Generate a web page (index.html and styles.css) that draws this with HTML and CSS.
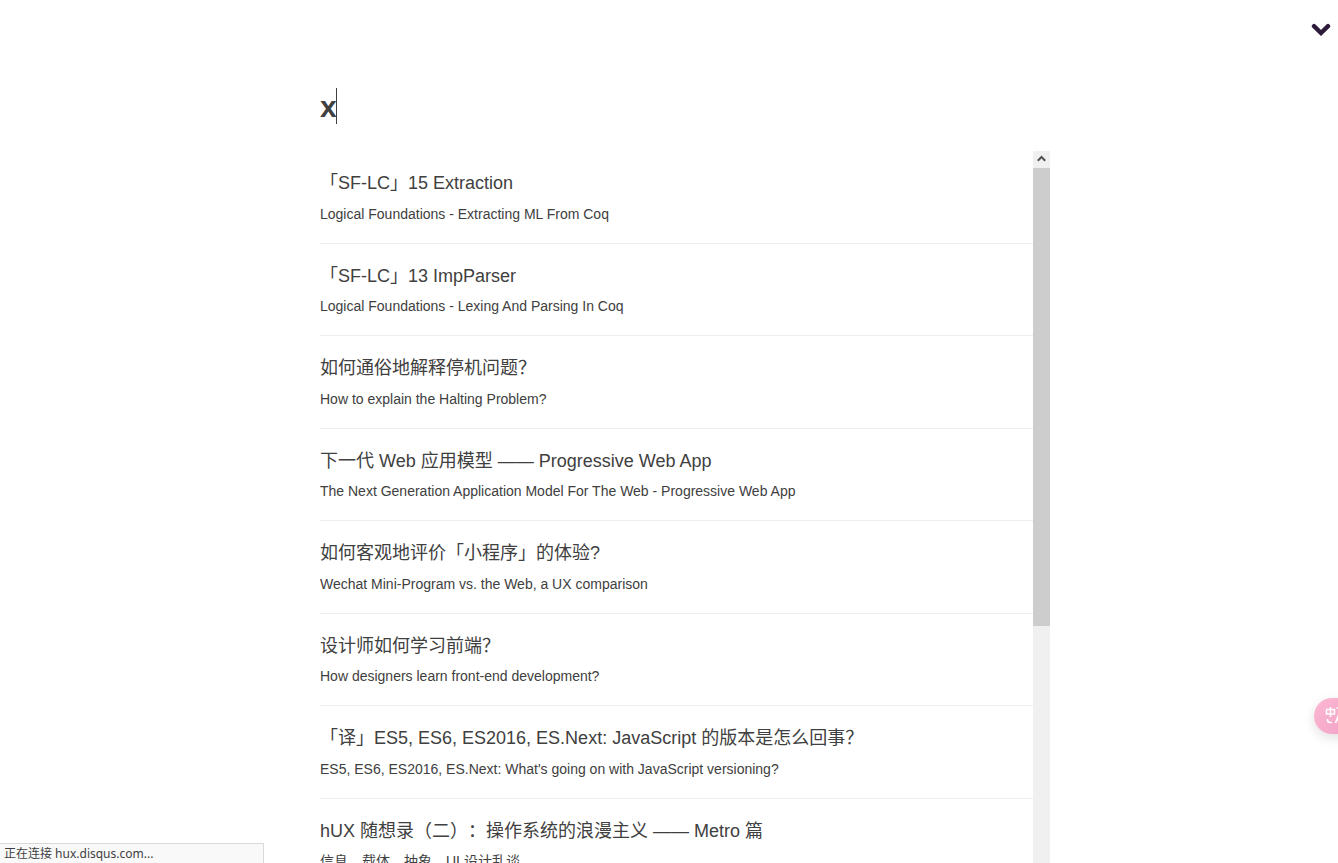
FILE: index.html
```html
<!DOCTYPE html>
<html lang="zh-CN">
<head>
<meta charset="utf-8">
<title>Search</title>
<link rel="stylesheet" href="styles.css">
</head>
<body>
<main class="search-page">
  <header class="search-top">
    <button class="close" type="button" aria-label="Close search">
      <svg width="20" height="16" viewBox="0 0 20 16"><path d="M3 4.2 L10 11 L17 4.2" fill="none" stroke="#2e1a3a" stroke-width="4.4" stroke-linecap="round"/></svg>
    </button>
  </header>
  <div class="search-main">
    <form class="search-form">
      <input class="search-input" type="text" value="x" aria-label="Search">
      <span class="caret"></span>
    </form>
    <div class="results">
      <ul class="result-list">
        <li class="result"><a href="#"><h2>「SF-LC」15 Extraction</h2><p>Logical Foundations - Extracting ML From Coq</p></a></li>
        <li class="result"><a href="#"><h2>「SF-LC」13 ImpParser</h2><p>Logical Foundations - Lexing And Parsing In Coq</p></a></li>
        <li class="result"><a href="#"><h2>如何通俗地解释停机问题？</h2><p>How to explain the Halting Problem?</p></a></li>
        <li class="result"><a href="#"><h2>下一代 Web 应用模型 —— Progressive Web App</h2><p>The Next Generation Application Model For The Web - Progressive Web App</p></a></li>
        <li class="result"><a href="#"><h2>如何客观地评价「小程序」的体验?</h2><p>Wechat Mini-Program vs. the Web, a UX comparison</p></a></li>
        <li class="result"><a href="#"><h2>设计师如何学习前端？</h2><p>How designers learn front-end development?</p></a></li>
        <li class="result"><a href="#"><h2>「译」ES5, ES6, ES2016, ES.Next: JavaScript 的版本是怎么回事？</h2><p>ES5, ES6, ES2016, ES.Next: What's going on with JavaScript versioning?</p></a></li>
        <li class="result"><a href="#"><h2>hUX 随想录（二）：操作系统的浪漫主义 —— Metro 篇</h2><p>信息、载体、抽象、UI 设计乱谈</p></a></li>
      </ul>
      <div class="scrollbar">
        <svg class="scroll-up" width="17" height="17" viewBox="0 0 17 17"><path d="M4.8 9.7 L8.5 6 L12.2 9.7" fill="none" stroke="#505050" stroke-width="2"/></svg>
        <div class="scroll-thumb"></div>
      </div>
    </div>
  </div>
</main>
<button class="translate" type="button" aria-label="Translate">
  <svg width="26" height="20" viewBox="0 0 26 20" fill="none" stroke="#fff" stroke-width="1.6"><path d="M1.5 3.5h8v4.5h-8zM5.5 1v10M2.5 13v1q0 2.5 2.500 2.500h2M10.500 17 14 8 17.500 17M12 14h4M11.500 2h5v3"/></svg>
</button>
<div class="status">正在连接 hux.disqus.com...</div>
</body>
</html>
```
FILE: styles.css
```css
* {
  box-sizing: border-box;
}

body {
  margin: 0;
  background: #fff;
  color: #404040;
  font-family: "Liberation Sans", "Noto Sans CJK SC", sans-serif;
  text-spacing-trim: space-all;
}

.search-page {
  display: flex;
  flex-direction: column;
  height: 100vh;
  overflow: hidden;
}

.search-top {
  display: flex;
  justify-content: flex-end;
  padding: 22px 7px 0 0;
}

.close {
  display: flex;
  padding: 0;
  border: 0;
  background: none;
}

.search-main {
  display: flex;
  flex: 1;
  flex-direction: column;
  width: 100%;
  max-width: 762px;
  min-height: 0;
  margin: 0 auto;
  padding: 50px 0 0 32px;
}

.search-form {
  position: relative;
}

.search-input {
  display: block;
  width: 100%;
  height: 36px;
  padding: 2px 0 0;
  border: 0;
  outline: 0;
  background: none;
  color: #404040;
  font: bold 30px/34px "Liberation Sans", sans-serif;
}

.caret {
  position: absolute;
  top: 0;
  left: 16px;
  width: 1px;
  height: 36px;
  background: #404040;
}

.results {
  display: flex;
  flex: 1;
  min-height: 0;
  margin-top: 27px;
}

.result-list {
  flex: 1;
  margin: 0;
  padding: 0;
  overflow: hidden;
  list-style: none;
}

.result {
  padding: 21px 0 19px;
  border-bottom: 1px solid #eee;
}

.result a {
  color: inherit;
  text-decoration: none;
}

.result h2 {
  margin: 0 0 9px;
  font-size: 18px;
  font-weight: 400;
  line-height: 1.25;
}

.result p {
  margin: 0;
  font-size: 14px;
  line-height: 20px;
}

.scrollbar {
  display: flex;
  flex-direction: column;
  width: 17px;
  background: #f0f0f0;
}

.scroll-thumb {
  height: 64.3%;
  background: #cdcdcd;
}

.scroll-up {
  flex: none;
}

.translate {
  position: fixed;
  right: -24px;
  bottom: 129px;
  display: flex;
  align-items: center;
  width: 48px;
  height: 36px;
  padding: 0 0 0 11px;
  border: 0;
  border-radius: 18px;
  background: linear-gradient(135deg, #fbb8d3, #f29fc4);
  box-shadow: 0 4px 12px rgba(0, 0, 0, 0.12);
}

.status {
  position: fixed;
  bottom: 0;
  left: 0;
  width: 264px;
  height: 20px;
  padding-left: 4px;
  border: 1px solid #d9d9d9;
  border-width: 1px 1px 0 0;
  background: #f9f9f9;
  font: 12px/20px "Noto Sans", "Noto Sans CJK SC", sans-serif;
}
```
